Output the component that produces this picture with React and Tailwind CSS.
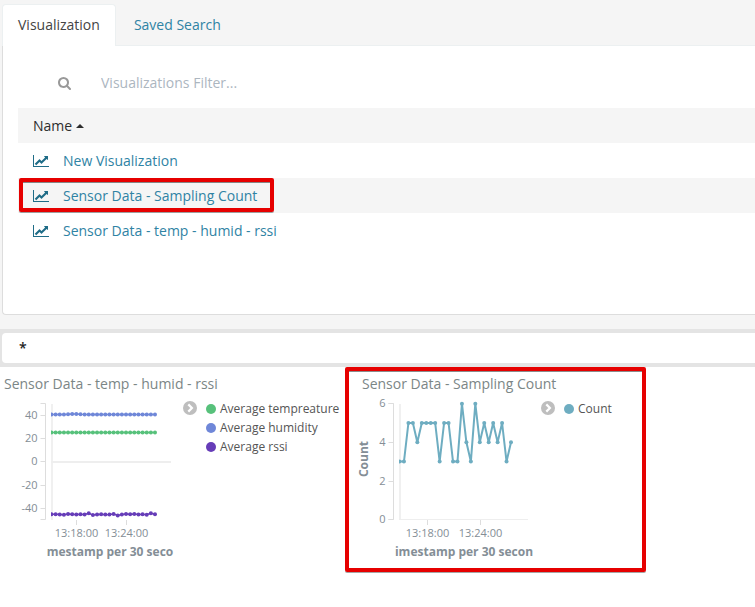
import React from "react";

function LineChartIcon() {
  return (
    <svg className="block h-[14px] w-4 fill-[#1f6c87]" viewBox="0 0 2048 1792" aria-hidden="true">
      <path d="M2048 1536v128h-2048v-1536h128v1408h1920zM1920 288v435q0 21-19.5 29.5t-35.5-7.5l-121-121-633 633q-10 10-23 10t-23-10l-233-233-416 416-192-192 585-585q10-10 23-10t23 10l233 233 464-464-121-121q-16-16-7.5-35.5t29.5-19.5h435q14 0 23 9t9 23z" />
    </svg>
  );
}

function SearchIcon() {
  return (
    <svg className="h-[13px] w-[13px] fill-[#999]" viewBox="64 128 1664 1664" aria-hidden="true">
      <path d="M1216 832q0-185-131.5-316.5t-316.5-131.5-316.5 131.5-131.5 316.5 131.5 316.5 316.5 131.5 316.5-131.5 131.5-316.5zm512 832q0 52-38 90t-90 38q-54 0-90-38l-343-342q-179 124-399 124-143 0-273.5-55.5t-225-150-150-225-55.5-273.5 55.5-273.5 150-225 225-150 273.5-55.5 273.5 55.5 225 150 150 225 55.5 273.5q0 220-124 399l343 343q37 37 37 90z" />
    </svg>
  );
}

const highlight =
  "pointer-events-none absolute rounded-[2px] border-4 border-[#e60000] shadow-[0_1px_0_rgba(0,0,0,0.35),inset_0_1px_0_rgba(0,0,0,0.45)]";

const visualizations = [
  { name: "New Visualization" },
  { name: "Sensor Data - Sampling Count", marked: true },
  { name: "Sensor Data - temp - humid - rssi" },
];

const humidity = [40.4, 40.4, 40.4, 40.4, 40.5, 40.7, 40.7, 40.5, 40.4, 40.4, 40.4, 40.4, 40.4, 40.4, 40.4, 40.4, 40.4, 40.4, 40.4, 40.4, 40.4, 40.4, 40.4, 40.4, 40.4, 40.4];
const temperature = Array(26).fill(25);
const rssi = [-45.3, -45.3, -45.4, -45.7, -45, -45.3, -45.5, -45.2, -45.4, -44.5, -46, -45.5, -45.2, -45.6, -45.4, -45, -46.4, -45.5, -45, -45.2, -45, -45.4, -45.2, -45.7, -44.4, -45.3];
const counts = [3, 3, 5, 5, 4, 5, 5, 5, 5, 3, 5, 5, 3, 3, 6, 4, 3, 6, 4, 5, 4, 5, 4, 5, 3, 4];

function Series({ data, color, x0, step, yOf, width }) {
  const points = data.map((value, i) => [x0 + i * step, yOf(value)]);
  return (
    <g fill={color} stroke={color}>
      <polyline fill="none" strokeWidth={width} points={points.map((p) => p.join(",")).join(" ")} />
      {points.map(([x, y], i) => (
        <circle key={i} cx={x} cy={y} r="2" stroke="none" />
      ))}
    </g>
  );
}

function Axes({ axisX, bottom, ticks, left, times }) {
  return (
    <g>
      <path d={`M${axisX - 5} 7.5H${axisX}V${bottom}H${axisX - 5}`} fill="none" stroke="#ddd" />
      {ticks.map(([label, y]) => (
        <g key={label}>
          <path d={`M${axisX - 5} ${y}H${axisX}`} stroke="#ddd" />
          <text x={axisX - 8} y={y + 3.5} textAnchor="end">{label}</text>
        </g>
      ))}
      <path d={`M${left + 1} 8V124`} stroke="#f0f0f0" strokeWidth="2" />
      {times.map(([label, x]) => (
        <g key={label}>
          <path d={`M${x} 124V129`} stroke="#ddd" />
          <text x={x} y="141" textAnchor="middle">{label}</text>
        </g>
      ))}
    </g>
  );
}

function SensorChart() {
  const yOf = (v) => 65.5 - v * 1.165;
  const shared = { x0: 51.5, step: 4.14, yOf, width: 1.5 };
  return (
    <svg width="178" height="170" viewBox="0 0 178 170" className="shrink-0 fill-[#848e96] text-[11px]" role="img" aria-label="Sensor Data - temp - humid - rssi">
      <clipPath id="sensor-plot"><rect x="51" y="5" width="120" height="120" /></clipPath>
      <Axes
        axisX={45.5}
        bottom={123.5}
        left={51}
        ticks={[["40", 19.5], ["20", 42.5], ["0", 65.5], ["-20", 89.5], ["-40", 112.5]]}
        times={[["13:18:00", 76.5], ["13:24:00", 126.5]]}
      />
      <path d="M51 66H171" stroke="#eee" strokeWidth="2" />
      <g clipPath="url(#sensor-plot)">
        <Series data={temperature} color="#57c17b" {...shared} />
        <Series data={humidity} color="#6f87d8" {...shared} />
        <Series data={rssi} color="#663db8" {...shared} />
      </g>
      <text x="110" y="160" textAnchor="middle" className="text-[12px] font-bold">mestamp per 30 seco</text>
    </svg>
  );
}

function CountChart() {
  return (
    <svg width="191" height="170" viewBox="0 0 191 170" className="shrink-0 fill-[#848e96] text-[11px]" role="img" aria-label="Sensor Data - Sampling Count">
      <clipPath id="count-plot"><rect x="54" y="4" width="130" height="122" /></clipPath>
      <Axes
        axisX={48.5}
        bottom={123.5}
        left={54}
        ticks={[["6", 7.5], ["4", 46.5], ["2", 85.5], ["0", 123.5]]}
        times={[["13:18:00", 82.5], ["13:24:00", 135.5]]}
      />
      <path d="M54 123.5H183" stroke="#eee" />
      <text transform="translate(23 63) rotate(-90)" textAnchor="middle" className="text-[12px] font-bold">Count</text>
      <g clipPath="url(#count-plot)">
        <Series data={counts} color="#6eadc1" x0={54.5} step={4.46} yOf={(v) => 123.5 - v * 19.3} width={2} />
      </g>
      <text x="119" y="160" textAnchor="middle" className="text-[12px] font-bold">imestamp per 30 secon</text>
    </svg>
  );
}

function Legend({ items }) {
  return (
    <div className="flex items-start gap-[9px] pt-[3px]">
      <button type="button" aria-label="Toggle legend" className="mt-[2px] h-[14px] w-[14px]">
        <svg viewBox="0 0 14 14" className="block">
          <circle cx="7" cy="7" r="7" fill="#bebebe" />
          <path d="M5.3 3.4L8.9 7L5.3 10.6" fill="none" stroke="#fff" strokeWidth="2.2" />
        </svg>
      </button>
      <ul className="text-[12px] leading-[19px] whitespace-nowrap text-[#555]">
        {items.map((item) => (
          <li key={item.label} className="flex items-center gap-1">
            <svg viewBox="0 0 10 10" className="h-[10px] w-[10px]">
              <circle cx="5" cy="5" r="5" fill={item.color} />
            </svg>
            {item.label}
          </li>
        ))}
      </ul>
    </div>
  );
}

export default function App() {
  return (
    <div className="min-h-screen bg-white font-['Open_Sans',sans-serif] text-[14px] leading-5 text-[#2d2d2d]">
      <div className="bg-[#f5f5f5] pb-[14px] pl-[2px]">
        <nav className="flex pt-1">
          <button type="button" className="rounded-t border border-b-0 border-[#ecf0f1] bg-white px-[15px] pt-[10px] pb-[11px] text-[#444]">
            Visualization
          </button>
          <div className="flex-1 border-b border-[#ecf0f1]">
            <a href="#saved" className="inline-block px-[18px] pt-[11px] text-[#2f83a4]">Saved Search</a>
          </div>
        </nav>

        <div className="h-[269px] rounded-bl border-b border-l border-[#ddd] bg-white pt-5 pl-[15px]">
          <label className="flex h-[34px] items-center pl-10">
            <SearchIcon />
            <input
              type="text"
              aria-label="Visualizations Filter"
              placeholder="Visualizations Filter..."
              className="ml-[15px] min-w-0 flex-1 px-[15px] outline-none placeholder:text-[#acb6bf]"
            />
          </label>
          <table className="mt-2 w-full">
            <thead>
              <tr className="h-[35px] bg-[#f5f5f5]">
                <th className="py-0 pl-[15px] text-left font-normal">
                  <button type="button" className="flex items-center gap-1">
                    Name
                    <svg viewBox="0 0 8 4" className="h-1 w-2 fill-[#2d2d2d]"><path d="M0 4L4 0L8 4Z" /></svg>
                  </button>
                </th>
              </tr>
            </thead>
            <tbody>
              {visualizations.map((item) => (
                <tr key={item.name} className="h-[35px] even:bg-[#f5f5f5]">
                  <td className="relative py-0 pl-[15px]">
                    <a href="#visualization" className="flex items-center gap-[14px] text-[#2f83a4]">
                      <LineChartIcon />
                      {item.name}
                    </a>
                    {item.marked && <span className={`${highlight} top-0 left-px h-[34px] w-[255px]`} />}
                  </td>
                </tr>
              ))}
            </tbody>
          </table>
        </div>
      </div>

      <div className="bg-[#e4e4e4] py-1 pl-[2px]">
        <input
          type="text"
          aria-label="Query"
          defaultValue="*"
          className="block h-[30px] w-full rounded-l bg-white px-[17px] pb-[2px] text-[14px] font-semibold text-[#222] outline-none"
        />
      </div>

      <main className="flex">
        <section className="w-[345px] shrink-0">
          <h2 className="h-[29px] pt-[7px] pl-1 text-[#7b8686]">Sensor Data - temp - humid - rssi</h2>
          <div className="flex gap-[5px]">
            <SensorChart />
            <Legend
              items={[
                { label: "Average tempreature", color: "#57c17b" },
                { label: "Average humidity", color: "#6f87d8" },
                { label: "Average rssi", color: "#663db8" },
              ]}
            />
          </div>
        </section>
        <section className="relative h-[205px] w-[301px] shrink-0">
          <h2 className="h-[29px] pt-[7px] pl-[17px] text-[#7b8686]">Sensor Data - Sampling Count</h2>
          <div className="flex gap-[5px]">
            <CountChart />
            <Legend items={[{ label: "Count", color: "#6eadc1" }]} />
          </div>
          <span className={`${highlight} inset-0`} />
        </section>
      </main>
    </div>
  );
}
